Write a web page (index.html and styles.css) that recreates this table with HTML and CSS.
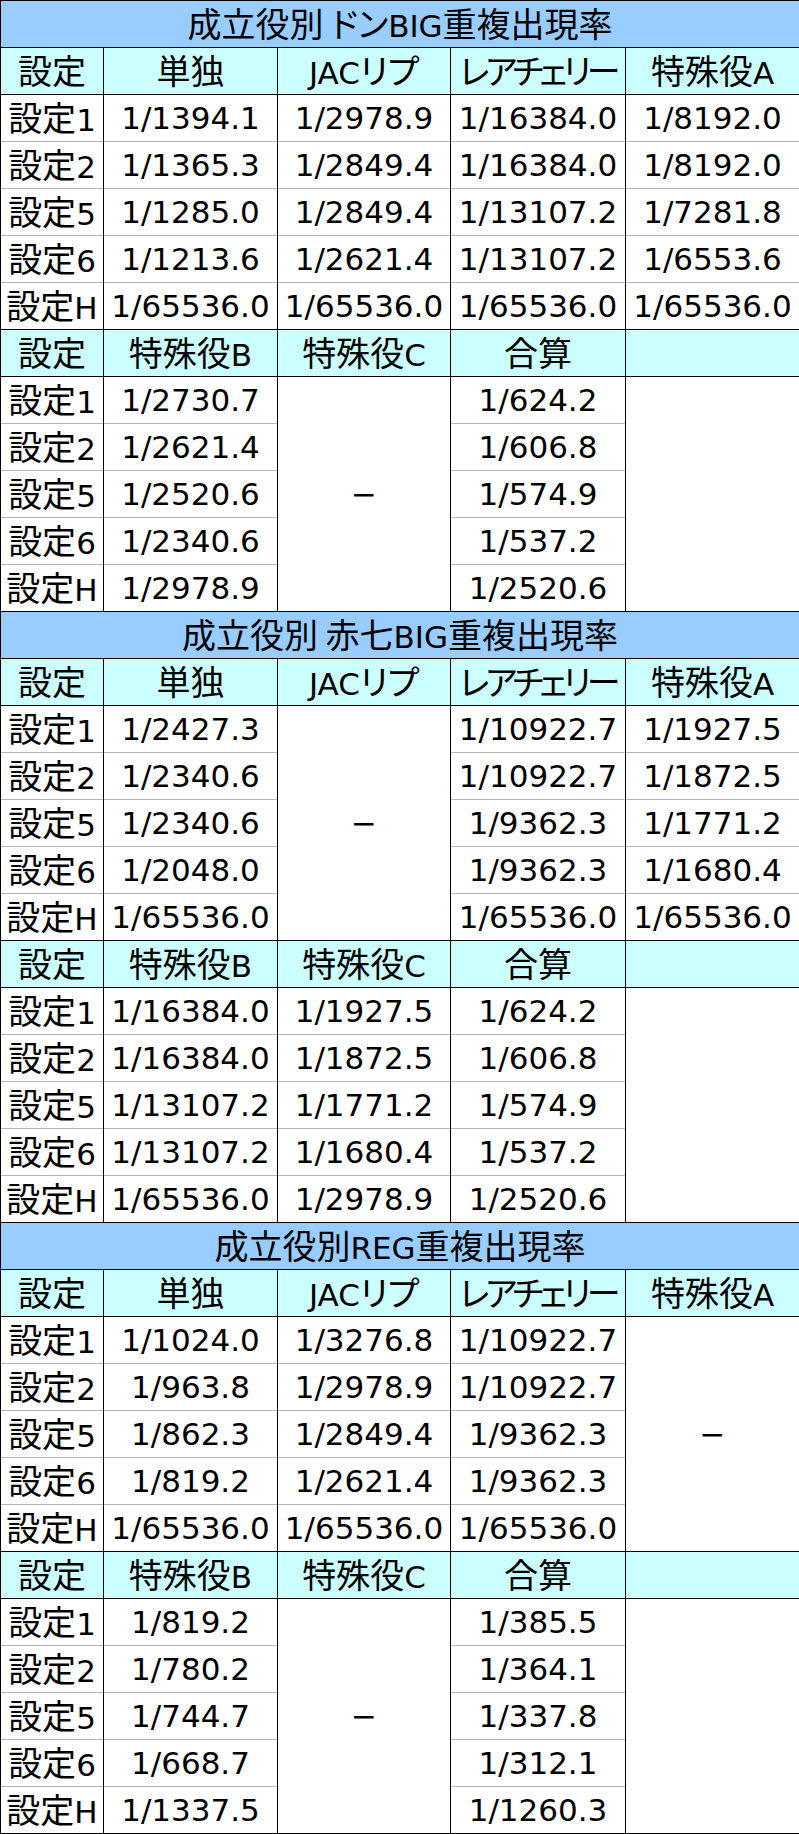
FILE: index.html
```html
<!DOCTYPE html>
<html lang="ja">
<head>
<meta charset="utf-8">
<title>成立役別重複出現率</title>
<link rel="stylesheet" href="styles.css">
</head>
<body>
<table class="rates">
  <colgroup>
    <col class="c-set"><col class="c-a"><col class="c-b"><col class="c-c"><col class="c-d">
  </colgroup>

  <tbody>
    <tr class="ttl"><td colspan="5"><span class="j">成立役別 <span class="k">ドン</span></span>BIG<span class="j">重複出現率</span></td></tr>
    <tr class="hd"><td><span class="j">設定</span></td><td><span class="j">単独</span></td><td>JAC<span class="j k">リプ</span></td><td><span class="j k rc">レアチェリー</span></td><td><span class="j">特殊役</span>A</td></tr>
    <tr><td><span class="j">設定</span>1</td><td>1/1394.1</td><td>1/2978.9</td><td>1/16384.0</td><td>1/8192.0</td></tr>
    <tr><td><span class="j">設定</span>2</td><td>1/1365.3</td><td>1/2849.4</td><td>1/16384.0</td><td>1/8192.0</td></tr>
    <tr><td><span class="j">設定</span>5</td><td>1/1285.0</td><td>1/2849.4</td><td>1/13107.2</td><td>1/7281.8</td></tr>
    <tr><td><span class="j">設定</span>6</td><td>1/1213.6</td><td>1/2621.4</td><td>1/13107.2</td><td>1/6553.6</td></tr>
    <tr><td><span class="j">設定</span>H</td><td>1/65536.0</td><td>1/65536.0</td><td>1/65536.0</td><td>1/65536.0</td></tr>
    <tr class="hd"><td><span class="j">設定</span></td><td><span class="j">特殊役</span>B</td><td><span class="j">特殊役</span>C</td><td><span class="j">合算</span></td><td></td></tr>
    <tr><td><span class="j">設定</span>1</td><td>1/2730.7</td><td rowspan="5" class="dash">−</td><td>1/624.2</td><td rowspan="5"></td></tr>
    <tr><td><span class="j">設定</span>2</td><td>1/2621.4</td><td>1/606.8</td></tr>
    <tr><td><span class="j">設定</span>5</td><td>1/2520.6</td><td>1/574.9</td></tr>
    <tr><td><span class="j">設定</span>6</td><td>1/2340.6</td><td>1/537.2</td></tr>
    <tr><td><span class="j">設定</span>H</td><td>1/2978.9</td><td>1/2520.6</td></tr>
  </tbody>

  <tbody>
    <tr class="ttl"><td colspan="5"><span class="j">成立役別 赤七</span>BIG<span class="j">重複出現率</span></td></tr>
    <tr class="hd"><td><span class="j">設定</span></td><td><span class="j">単独</span></td><td>JAC<span class="j k">リプ</span></td><td><span class="j k rc">レアチェリー</span></td><td><span class="j">特殊役</span>A</td></tr>
    <tr><td><span class="j">設定</span>1</td><td>1/2427.3</td><td rowspan="5" class="dash">−</td><td>1/10922.7</td><td>1/1927.5</td></tr>
    <tr><td><span class="j">設定</span>2</td><td>1/2340.6</td><td>1/10922.7</td><td>1/1872.5</td></tr>
    <tr><td><span class="j">設定</span>5</td><td>1/2340.6</td><td>1/9362.3</td><td>1/1771.2</td></tr>
    <tr><td><span class="j">設定</span>6</td><td>1/2048.0</td><td>1/9362.3</td><td>1/1680.4</td></tr>
    <tr><td><span class="j">設定</span>H</td><td>1/65536.0</td><td>1/65536.0</td><td>1/65536.0</td></tr>
    <tr class="hd"><td><span class="j">設定</span></td><td><span class="j">特殊役</span>B</td><td><span class="j">特殊役</span>C</td><td><span class="j">合算</span></td><td></td></tr>
    <tr><td><span class="j">設定</span>1</td><td>1/16384.0</td><td>1/1927.5</td><td>1/624.2</td><td rowspan="5"></td></tr>
    <tr><td><span class="j">設定</span>2</td><td>1/16384.0</td><td>1/1872.5</td><td>1/606.8</td></tr>
    <tr><td><span class="j">設定</span>5</td><td>1/13107.2</td><td>1/1771.2</td><td>1/574.9</td></tr>
    <tr><td><span class="j">設定</span>6</td><td>1/13107.2</td><td>1/1680.4</td><td>1/537.2</td></tr>
    <tr><td><span class="j">設定</span>H</td><td>1/65536.0</td><td>1/2978.9</td><td>1/2520.6</td></tr>
  </tbody>

  <tbody>
    <tr class="ttl"><td colspan="5"><span class="j">成立役別</span>REG<span class="j">重複出現率</span></td></tr>
    <tr class="hd"><td><span class="j">設定</span></td><td><span class="j">単独</span></td><td>JAC<span class="j k">リプ</span></td><td><span class="j k rc">レアチェリー</span></td><td><span class="j">特殊役</span>A</td></tr>
    <tr><td><span class="j">設定</span>1</td><td>1/1024.0</td><td>1/3276.8</td><td>1/10922.7</td><td rowspan="5" class="dash">−</td></tr>
    <tr><td><span class="j">設定</span>2</td><td>1/963.8</td><td>1/2978.9</td><td>1/10922.7</td></tr>
    <tr><td><span class="j">設定</span>5</td><td>1/862.3</td><td>1/2849.4</td><td>1/9362.3</td></tr>
    <tr><td><span class="j">設定</span>6</td><td>1/819.2</td><td>1/2621.4</td><td>1/9362.3</td></tr>
    <tr><td><span class="j">設定</span>H</td><td>1/65536.0</td><td>1/65536.0</td><td>1/65536.0</td></tr>
    <tr class="hd"><td><span class="j">設定</span></td><td><span class="j">特殊役</span>B</td><td><span class="j">特殊役</span>C</td><td><span class="j">合算</span></td><td></td></tr>
    <tr><td><span class="j">設定</span>1</td><td>1/819.2</td><td rowspan="5" class="dash">−</td><td>1/385.5</td><td rowspan="5"></td></tr>
    <tr><td><span class="j">設定</span>2</td><td>1/780.2</td><td>1/364.1</td></tr>
    <tr><td><span class="j">設定</span>5</td><td>1/744.7</td><td>1/337.8</td></tr>
    <tr><td><span class="j">設定</span>6</td><td>1/668.7</td><td>1/312.1</td></tr>
    <tr><td><span class="j">設定</span>H</td><td>1/1337.5</td><td>1/1260.3</td></tr>
  </tbody>
</table>
</body>
</html>
```

FILE: styles.css
```css
html, body {
  margin: 0;
  padding: 0;
  background: #ffffff;
}

.rates {
  width: 799px;
  table-layout: fixed;
  border-collapse: collapse;
  border-bottom: 1px solid #000;
  border-left: 1px solid #000;
  border-right: 1px solid #000;
  font-family: "DejaVu Sans", "Noto Sans CJK JP", sans-serif;
  font-size: 31px;
  color: #000;
}

.c-set { width: 103px; }
.c-a { width: 174px; }
.c-b { width: 173px; }
.c-c { width: 175px; }
.c-d { width: 174px; }

.rates tr {
  height: 47px;
}

.rates td {
  padding: 0;
  text-align: center;
  vertical-align: middle;
  white-space: nowrap;
  line-height: 1;
  border-left: 1px solid #000;
  border-right: 1px solid #000;
  border-top: 1px solid #b4b4b4;
}

.rates .ttl td {
  background: #99ccff;
  border-top: 1px solid #000;
  border-bottom: 1px solid #000;
}

.rates tbody:first-child .ttl td {
  border-top: none;
}

.rates .hd td {
  background: #ccffff;
  border-top: 1px solid #000;
  border-bottom: 1px solid #000;
}

.j {
  font-family: "Noto Sans CJK JP", sans-serif;
  font-size: 34px;
}

.k {
  font-feature-settings: "palt" 1;
}

.rc {
  letter-spacing: -4px;
}

.dash {
  font-size: 31px;
}
```
